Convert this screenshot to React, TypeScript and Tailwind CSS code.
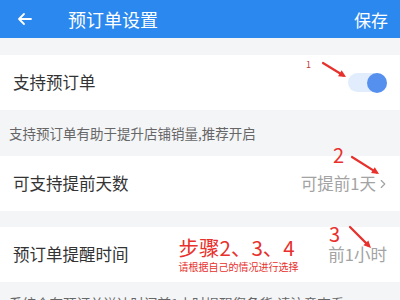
import { ChevronRight } from 'lucide-react';

const font = { fontFamily: '"Noto Sans CJK SC", "Noto Sans", sans-serif' };

function RedArrow({ x1, y1, x2, y2 }: { x1: number; y1: number; x2: number; y2: number }) {
  const a = Math.atan2(y2 - y1, x2 - x1);
  const l = 8;
  const p1 = [x2 - l * Math.cos(a - 0.45), y2 - l * Math.sin(a - 0.45)];
  const p2 = [x2 - l * Math.cos(a + 0.45), y2 - l * Math.sin(a + 0.45)];
  return (
    <g>
      <line x1={x1} y1={y1} x2={x2 - 3 * Math.cos(a)} y2={y2 - 3 * Math.sin(a)} stroke="#e8302c" strokeWidth={2.2} strokeLinecap="round" />
      <polygon points={`${x2},${y2} ${p1[0]},${p1[1]} ${p2[0]},${p2[1]}`} fill="#e8302c" />
    </g>
  );
}

export default function App() {
  return (
    <div className="relative w-[400px] h-[300px] overflow-hidden bg-[#f4f5f7]" style={font}>
      {/* 顶栏 */}
      <header className="flex items-center h-[38px] bg-[#2a88ef] text-white">
        <svg className="ml-[17px] w-[16px] h-[16px]" viewBox="0 0 16 16" fill="none" stroke="white" strokeWidth={1.8} strokeLinecap="round" strokeLinejoin="round">
          <path d="M14 8H2M7 3L2 8l5 5" />
        </svg>
        <span className="ml-[35px] text-[18px] leading-none">预订单设置</span>
        <span className="ml-auto mr-[12px] text-[17px] leading-none">保存</span>
      </header>

      <div className="h-[17px]" />

      {/* 支持预订单 */}
      <div className="relative flex items-center h-[55px] bg-white px-[13px]">
        <span className="text-[16.5px] text-[#333]">支持预订单</span>
        <div className="ml-auto mr-[0px] flex items-center justify-end w-[39px] h-[19px] rounded-full bg-[#e1ecfc]">
          <div className="w-[20px] h-[20px] rounded-full bg-[#5690ee]" />
        </div>
        <span className="absolute left-[306px] top-[3px] text-[9px] text-[#c03a3a]">1</span>
      </div>

      <div className="h-[46px] flex items-center px-[9px] text-[13.5px] text-[#666]">
        支持预订单有助于提升店铺销量,推荐开启
      </div>

      {/* 可支持提前天数 */}
      <div className="relative flex items-center h-[55px] bg-white px-[13px]">
        <span className="text-[16.5px] text-[#333]">可支持提前天数</span>
        <span className="ml-auto text-[16.5px] text-[#a3a3a3]">可提前1天</span>
        <ChevronRight className="w-[14px] h-[16px] -mr-[3px] text-[#a3a3a3]" strokeWidth={2} />
        <span className="absolute left-[333px] -top-[11px] text-[20px] leading-none text-[#e8302c]">2</span>
      </div>

      <div className="h-[16px]" />

      {/* 预订单提醒时间 */}
      <div className="relative flex items-center h-[55px] bg-white px-[13px]">
        <span className="text-[16.5px] text-[#333]">预订单提醒时间</span>
        <div className="ml-[50px] flex flex-col text-[#e8302c]">
          <span className="text-[20.5px] leading-[22px]">步骤2、3、4</span>
          <span className="text-[10px] leading-[14px] mt-[2px]">请根据自己的情况进行选择</span>
        </div>
        <span className="ml-auto text-[16.5px] text-[#a3a3a3]">前1小时</span>
        <span className="absolute left-[329px] -top-[3px] text-[20px] leading-none text-[#e8302c]">3</span>
      </div>

      <div className="px-[9px] pt-[11px] text-[13.5px] text-[#666]">
        系统会在预订单送达时间前1小时提醒您备货,请注意查看
      </div>

      <svg className="absolute left-0 top-0 pointer-events-none" width={400} height={300}>
        <RedArrow x1={323} y1={63} x2={346} y2={77} />
        <RedArrow x1={352} y1={157} x2={379} y2={174} />
        <RedArrow x1={350} y1={227} x2={371} y2={248} />
      </svg>
    </div>
  );
}
